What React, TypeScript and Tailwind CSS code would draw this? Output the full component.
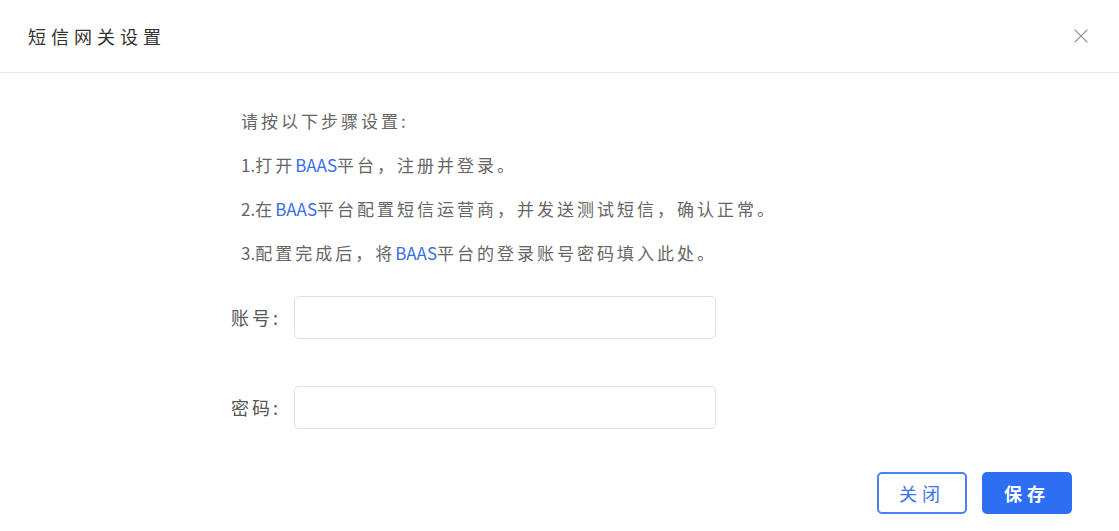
import { X } from "lucide-react";

const FONT = { fontFamily: '"Microsoft YaHei", "Noto Sans CJK SC", "Noto Sans", sans-serif' };

function Blue({ children }: { children: React.ReactNode }) {
  return <span className="tracking-normal text-[#3b6ee6]">{children}</span>;
}

function Num({ children }: { children: React.ReactNode }) {
  return <span className="tracking-normal">{children}</span>;
}

export default function App() {
  return (
    <div className="h-[531px] w-[1119px] bg-white" style={FONT}>
      {/* Header */}
      <div className="flex h-[73px] items-center justify-between border-b border-[#e8e8e8] pl-[28px] pr-[26px]">
        <h2 className="text-[18px] tracking-[5px] text-[#333]">短信网关设置</h2>
        <X className="h-[24px] w-[24px] text-[#999]" strokeWidth={1.2} />
      </div>

      {/* Body */}
      <div className="flex flex-col pl-[241px] pt-[26px] text-[17px] tracking-[3px] text-[#666]">
        <p className="leading-[44px]">请按以下步骤设置<Num>:</Num></p>
        <p className="leading-[44px]"><Num>1.</Num>打开<Blue>BAAS</Blue>平台，注册并登录。</p>
        <p className="leading-[44px]"><Num>2.</Num>在<Blue>BAAS</Blue>平台配置短信运营商，并发送测试短信，确认正常。</p>
        <p className="leading-[44px]"><Num>3.</Num>配置完成后，将<Blue>BAAS</Blue>平台的登录账号密码填入此处。</p>
      </div>

      {/* Form */}
      <div className="mt-[21px] flex flex-col gap-[47px] pl-[231px]">
        {["账号", "密码"].map((l) => (
          <div key={l} className="flex items-center">
            <label className="w-[63px] text-[18px] tracking-[3px] text-[#555]">{l}<span className="tracking-normal">:</span></label>
            <input className="h-[43px] w-[422px] rounded-[5px] border border-[#dcdfe6] outline-none" />
          </div>
        ))}
      </div>

      {/* Footer */}
      <div className="mt-[43px] flex justify-end gap-[15px] pr-[47px]">
        <button className="h-[42px] w-[90px] rounded-[5px] border-2 border-[#4a80f5] bg-white text-[18px] tracking-[5px] text-[#3a72f0]">关闭</button>
        <button className="h-[42px] w-[90px] rounded-[5px] bg-[#2d6ef3] text-[18px] font-bold tracking-[5px] text-white">保存</button>
      </div>
    </div>
  );
}
